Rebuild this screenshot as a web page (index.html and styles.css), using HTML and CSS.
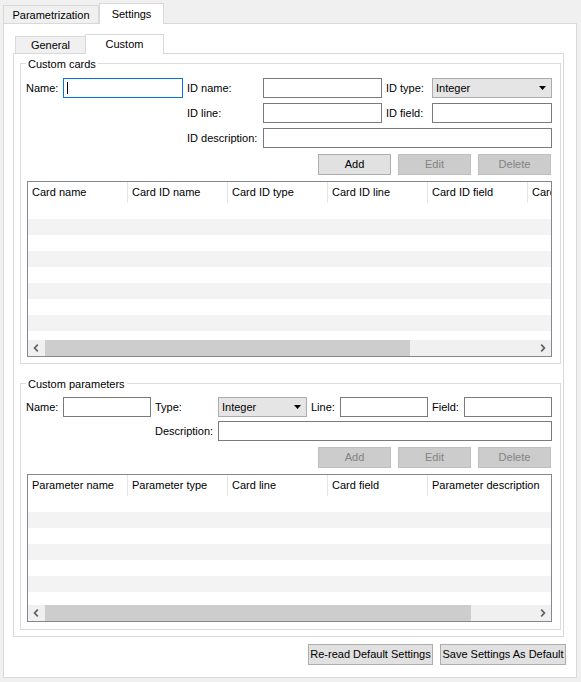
FILE: index.html
```html
<!DOCTYPE html>
<html>
<head>
<meta charset="utf-8">
<title>Settings</title>
<link rel="stylesheet" href="styles.css">
</head>
<body>
<div class="window">
  <div class="tabbar outer-tabbar">
    <div class="tab tab-param">Parametrization</div>
    <div class="tab selected tab-settings">Settings</div>
  </div>
  <div class="outer-pane">
    <div class="tabbar inner-tabbar">
      <div class="tab tab-general">General</div>
      <div class="tab selected tab-custom">Custom</div>
    </div>
    <div class="inner-pane">
      <div class="group">
        <div class="group-title">Custom cards</div>
        <div class="form form-cards">
          <span class="lbl">Name:</span>
          <div class="input focus"><span class="caret"></span></div>
          <span class="lbl pad">ID name:</span>
          <div class="input"></div>
          <span class="lbl pad">ID type:</span>
          <div class="combo"><span>Integer</span><svg width="7" height="4" viewBox="0 0 7 4"><path d="M0 0H7L3.5 4Z" fill="#000"/></svg></div>
          <span class="lbl pad c3">ID line:</span>
          <div class="input"></div>
          <span class="lbl pad">ID field:</span>
          <div class="input"></div>
          <span class="lbl pad c3">ID description:</span>
          <div class="input span3"></div>
        </div>
        <div class="btn-row">
          <button class="btn">Add</button>
          <button class="btn disabled">Edit</button>
          <button class="btn disabled">Delete</button>
        </div>
        <div class="table table-cards">
          <div class="thead">
            <div class="th">Card name</div>
            <div class="th">Card ID name</div>
            <div class="th">Card ID type</div>
            <div class="th">Card ID line</div>
            <div class="th">Card ID field</div>
            <div class="th last">Card ID description</div>
          </div>
          <div class="tbody"></div>
          <div class="hscroll">
            <div class="sb-btn"><svg width="6" height="8" viewBox="0 0 6 8"><path d="M4.8 0.6L1.6 4L4.8 7.4" fill="none" stroke="#606060" stroke-width="1.7"/></svg></div>
            <div class="sb-track"><div class="sb-thumb" style="width:365px"></div></div>
            <div class="sb-btn"><svg width="6" height="8" viewBox="0 0 6 8"><path d="M1.2 0.6L4.4 4L1.2 7.4" fill="none" stroke="#606060" stroke-width="1.7"/></svg></div>
          </div>
        </div>
      </div>
      <div class="group">
        <div class="group-title">Custom parameters</div>
        <div class="form form-params">
          <span class="lbl">Name:</span>
          <div class="input"></div>
          <span class="lbl pad">Type:</span>
          <div class="combo"><span>Integer</span><svg width="7" height="4" viewBox="0 0 7 4"><path d="M0 0H7L3.5 4Z" fill="#000"/></svg></div>
          <span class="lbl pad">Line:</span>
          <div class="input"></div>
          <span class="lbl pad">Field:</span>
          <div class="input"></div>
          <span class="lbl pad c3">Description:</span>
          <div class="input span5"></div>
        </div>
        <div class="btn-row">
          <button class="btn disabled">Add</button>
          <button class="btn disabled">Edit</button>
          <button class="btn disabled">Delete</button>
        </div>
        <div class="table table-params">
          <div class="thead">
            <div class="th">Parameter name</div>
            <div class="th">Parameter type</div>
            <div class="th">Card line</div>
            <div class="th">Card field</div>
            <div class="th last">Parameter description</div>
          </div>
          <div class="tbody"></div>
          <div class="hscroll">
            <div class="sb-btn"><svg width="6" height="8" viewBox="0 0 6 8"><path d="M4.8 0.6L1.6 4L4.8 7.4" fill="none" stroke="#606060" stroke-width="1.7"/></svg></div>
            <div class="sb-track"><div class="sb-thumb" style="width:426px"></div></div>
            <div class="sb-btn"><svg width="6" height="8" viewBox="0 0 6 8"><path d="M1.2 0.6L4.4 4L1.2 7.4" fill="none" stroke="#606060" stroke-width="1.7"/></svg></div>
          </div>
        </div>
      </div>
    </div>
    <div class="footer">
      <button class="btn btn-reread">Re-read Default Settings</button>
      <button class="btn btn-save">Save Settings As Default</button>
    </div>
  </div>
</div>
</body>
</html>
```

FILE: styles.css
```css
* { box-sizing: border-box; }
html, body { margin: 0; padding: 0; }
body {
  width: 581px;
  height: 682px;
  overflow: hidden;
  background: #f0f0f0;
  font-family: "Liberation Sans", Arial, sans-serif;
  font-size: 11px;
  line-height: 13px;
  color: #000;
}
.window {
  height: 682px;
  padding: 3px 4px 4px 3px;
  display: flex;
  flex-direction: column;
}
.tabbar { display: flex; align-items: flex-end; flex: none; }
.tab {
  border: 1px solid #d9d9d9;
  border-bottom: 0;
  background: #f0f0f0;
  display: flex;
  align-items: center;
  justify-content: center;
  white-space: nowrap;
}
.tab.selected {
  background: #fff;
  margin-bottom: -1px;
  position: relative;
  z-index: 1;
}
.outer-tabbar { height: 20px; }
.tab-param { width: 96px; height: 18px; padding-top: 1px; }
.tab-settings { width: 65px; height: 21px; }
.inner-tabbar { height: 19px; margin-left: 2px; }
.tab-general { width: 71px; height: 17px; padding-top: 1px; }
.tab-custom { width: 79px; height: 20px; margin-left: -1px; }

.outer-pane {
  flex: 1;
  border: 1px solid #d9d9d9;
  background: #fff;
  padding: 10px 10px 12px 9px;
  display: flex;
  flex-direction: column;
}
.inner-pane {
  border: 1px solid #d9d9d9;
  margin-right: 2px;
  padding: 9px 2px 6px 6px;
}
.group {
  border: 1px solid #dcdcdc;
  padding: 0 8px 6px 5px;
}
.group + .group { margin-top: 19px; padding-bottom: 7px; }
.group-title {
  width: max-content;
  margin-top: -6px;
  padding: 0 2px;
  background: #fff;
}
.form { display: grid; grid-auto-rows: 20px; }
.form-cards {
  grid-template-columns: 37px 120px 80px 119px 50px 120px;
  row-gap: 5px;
  margin-top: 7px;
}
.form-params {
  grid-template-columns: 37px 88px 67px 89px 33px 88px 36px 88px;
  row-gap: 4px;
  margin-top: 6px;
}
.lbl { display: flex; align-items: center; white-space: nowrap; }
.lbl.pad { padding-left: 4px; }
.c3 { grid-column: 3; }
.span3 { grid-column: span 3; }
.span5 { grid-column: span 5; }
.input { border: 1px solid #7a7a7a; background: #fff; }
.input.focus { border-color: #0078d7; padding: 3px 0 0 3px; }
.caret { display: block; width: 1px; height: 12px; background: #000; }
.combo {
  border: 1px solid #acacac;
  background: #e5e5e5;
  display: flex;
  align-items: center;
  padding-left: 3px;
}
.combo svg { margin-left: auto; margin-right: 5px; }

.btn-row {
  display: flex;
  justify-content: flex-end;
  gap: 7px;
  margin-top: 6px;
  padding-right: 1px;
}
.btn {
  font: inherit;
  color: #000;
  width: 73px;
  height: 21px;
  padding: 0;
  margin: 0;
  border: 1px solid #adadad;
  background: #e1e1e1;
  border-radius: 0;
  display: flex;
  align-items: center;
  justify-content: center;
  white-space: nowrap;
}
.btn.disabled { background: #cccccc; border-color: #bfbfbf; color: #838383; }

.table {
  margin: 6px 0 0 1px;
  border: 1px solid #828790;
  display: flex;
  flex-direction: column;
  overflow: hidden;
}
.table-cards { height: 176px; }
.table-params { height: 148px; }
.thead { display: flex; height: 21px; flex: none; overflow: hidden; background: #fff; }
.th {
  flex: none;
  width: 100px;
  border-right: 1px solid #e5e5e5;
  padding-left: 4px;
  display: flex;
  align-items: center;
  white-space: nowrap;
  overflow: hidden;
}
.th.last { width: auto; flex: 1 1 0; min-width: 0; border-right: 0; }
.tbody {
  flex: 1;
  background: repeating-linear-gradient(#fff 0 16px, #f3f3f3 16px 32px);
}
.hscroll { flex: none; height: 16px; display: flex; background: #f0f0f0; }
.sb-btn { width: 16px; flex: none; display: flex; align-items: center; justify-content: center; }
.sb-track { flex: 1; display: flex; }
.sb-thumb { background: #cdcdcd; margin-left: 1px; }

.footer {
  display: flex;
  justify-content: flex-end;
  gap: 7px;
  margin-top: 7px;
}
.btn-reread { width: 125px; }
.btn-save { width: 126px; }
```
